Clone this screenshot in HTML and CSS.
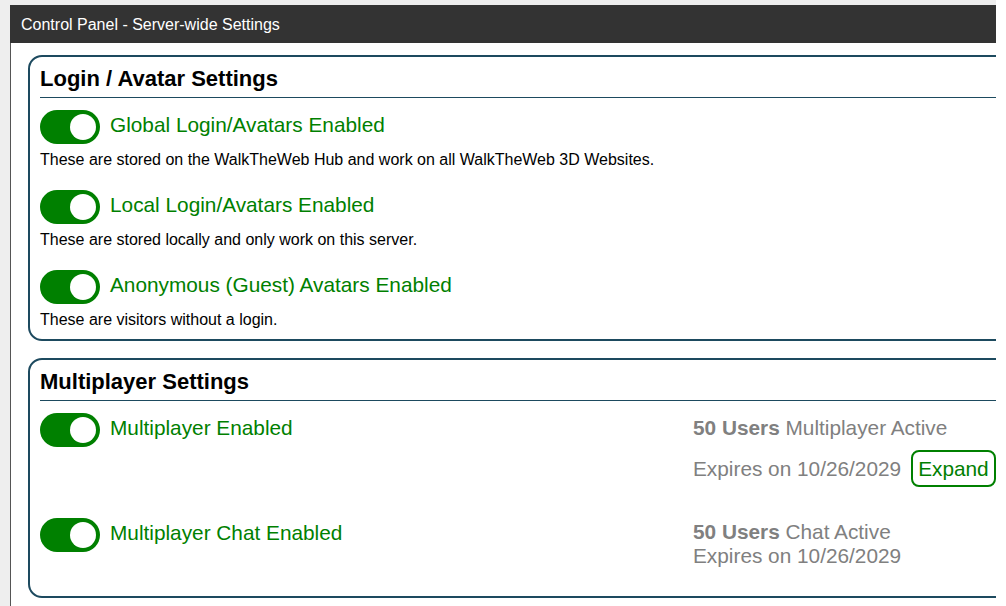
FILE: index.html
```html
<!DOCTYPE html>
<html lang="en">
<head>
<meta charset="utf-8">
<title>Control Panel - Server-wide Settings</title>
<link rel="stylesheet" href="styles.css">
</head>
<body>
<div class="page">
  <div class="panel">
    <div class="panel-head">Control Panel - Server-wide Settings</div>
    <div class="panel-body">
      <section class="box box-login">
        <h2 class="box-title">Login / Avatar Settings</h2>
        <div class="setting">
          <div class="toggle-row">
            <span class="toggle"><span class="knob"></span></span>
            <span class="toggle-label">Global Login/Avatars Enabled</span>
          </div>
          <div class="desc">These are stored on the WalkTheWeb Hub and work on all WalkTheWeb 3D Websites.</div>
        </div>
        <div class="setting">
          <div class="toggle-row">
            <span class="toggle"><span class="knob"></span></span>
            <span class="toggle-label">Local Login/Avatars Enabled</span>
          </div>
          <div class="desc">These are stored locally and only work on this server.</div>
        </div>
        <div class="setting">
          <div class="toggle-row">
            <span class="toggle"><span class="knob"></span></span>
            <span class="toggle-label">Anonymous (Guest) Avatars Enabled</span>
          </div>
          <div class="desc">These are visitors without a login.</div>
        </div>
      </section>

      <section class="box box-multi">
        <h2 class="box-title">Multiplayer Settings</h2>
        <div class="mp-row">
          <div class="mp-left">
            <div class="toggle-row">
              <span class="toggle"><span class="knob"></span></span>
              <span class="toggle-label">Multiplayer Enabled</span>
            </div>
          </div>
          <div class="mp-right">
            <div class="mp-line"><b>50 Users</b> Multiplayer Active</div>
            <div class="mp-expires">
              <span>Expires on 10/26/2029</span>
              <button class="expand" type="button">Expand</button>
            </div>
          </div>
        </div>
        <div class="mp-row">
          <div class="mp-left">
            <div class="toggle-row">
              <span class="toggle"><span class="knob"></span></span>
              <span class="toggle-label">Multiplayer Chat Enabled</span>
            </div>
          </div>
          <div class="mp-right mp-right-compact">
            <div><b>50 Users</b> Chat Active</div>
            <div>Expires on 10/26/2029</div>
          </div>
        </div>
      </section>
    </div>
  </div>
</div>
</body>
</html>
```

FILE: styles.css
```css
* { box-sizing: border-box; }

html, body {
  margin: 0;
  background: #ffffff;
}

body {
  font-family: "Liberation Sans", Arial, sans-serif;
  color: #000;
}

.page {
  width: 996px;
  height: 606px;
  background: #eeeeee;
  padding: 5px 0 0 10px;
  overflow: hidden;
}

.panel {
  background: #ffffff;
  height: 100%;
  overflow: hidden;
  display: flex;
  flex-direction: column;
}

.panel-head {
  height: 38px;
  flex: none;
  background: #333333;
  color: #ffffff;
  font-size: 16px;
  line-height: 38px;
  padding: 1px 0 0 11px;
}

.panel-body {
  flex: 1;
  border-left: 1px solid #555555;
  padding: 12px 0 0 17px;
}

.box {
  width: 1040px;
  border: 2px solid #1d4a5f;
  border-radius: 14px;
  padding: 0 10px 10px;
}

.box + .box { margin-top: 17px; }

.box-multi { padding-bottom: 28px; }

.box-title {
  margin: 0;
  font-size: 22px;
  font-weight: bold;
  line-height: 26px;
  padding: 9px 0 5px;
  border-bottom: 1px solid #1d4a5f;
  color: #000;
}

.setting { margin-top: 12px; }
.setting + .setting { margin-top: 21px; }

.toggle-row {
  display: flex;
  align-items: flex-start;
  gap: 10px;
}

.toggle {
  position: relative;
  flex: none;
  width: 60px;
  height: 34px;
  border-radius: 17px;
  background: #008000;
}

.knob {
  position: absolute;
  left: 30px;
  top: 4px;
  width: 26px;
  height: 26px;
  border-radius: 50%;
  background: #ffffff;
}

.toggle-label {
  color: #008000;
  font-size: 20.8px;
  line-height: 24px;
  margin-top: 3px;
  white-space: nowrap;
}

.desc {
  font-size: 16px;
  line-height: 19px;
  margin-top: 6px;
}

.mp-row {
  display: flex;
  align-items: flex-start;
  margin-top: 12px;
}

.mp-row + .mp-row { margin-top: 31px; }

.mp-left {
  flex: none;
  width: 653px;
}

.mp-right {
  color: #808080;
  font-size: 20.8px;
  white-space: nowrap;
}

.mp-line {
  line-height: 24px;
  margin-top: 3px;
}

.mp-expires {
  display: flex;
  align-items: center;
  height: 37px;
  margin-top: 10px;
}

.expand {
  margin-left: 10px;
  height: 37px;
  padding: 0 5px;
  border: 2px solid #008000;
  border-radius: 8px;
  background: #ffffff;
  color: #008000;
  font-family: inherit;
  font-size: 20.8px;
  line-height: 33px;
}

.mp-right-compact {
  padding-top: 2px;
  line-height: 24px;
}
```
